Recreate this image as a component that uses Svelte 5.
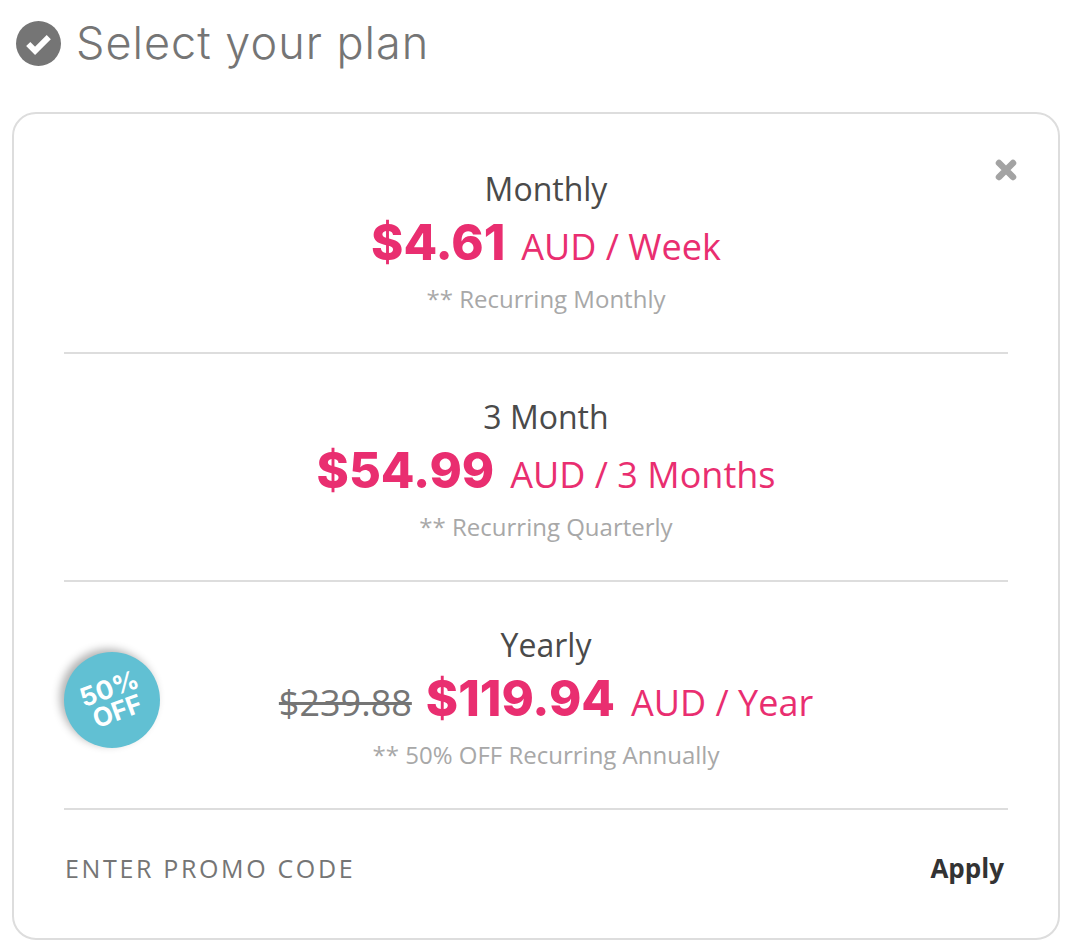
<script lang="ts">
	const plans = [
		{ name: 'Monthly', price: '$4.61', unit: 'AUD / Week', note: '** Recurring Monthly' },
		{ name: '3 Month', price: '$54.99', unit: 'AUD / 3 Months', note: '** Recurring Quarterly' },
		{ name: 'Yearly', old: '$239.88', price: '$119.94', unit: 'AUD / Year', note: '** 50% OFF Recurring Annually', badge: true }
	];
</script>

<div class="page">
	<header class="heading">
		<svg class="check" viewBox="0 0 46 46" width="45" height="45" aria-hidden="true">
			<circle cx="23" cy="23" r="23" fill="#757575" />
			<path d="M12.5 23.5l7 7 14-14" fill="none" stroke="#fff" stroke-width="6" />
		</svg>
		<h1>Select your plan</h1>
	</header>

	<section class="card">
		<svg class="close" viewBox="0 0 24 24" width="24" height="24" aria-hidden="true">
			<path d="M5 5l14 14M19 5L5 19" stroke="#a3a3a3" stroke-width="6.5" stroke-linecap="round" />
		</svg>
		{#each plans as plan}
			<div class="plan">
				{#if plan.badge}
					<div class="badge"><span>50%<br />OFF</span></div>
				{/if}
				<div class="name">{plan.name}</div>
				<div class="price-row">
					{#if plan.old}<s class="old">{plan.old}</s>{/if}
					<strong class="price">{plan.price}</strong>
					<span class="unit">{plan.unit}</span>
				</div>
				<div class="note">{plan.note}</div>
			</div>
		{/each}
		<div class="promo">
			<span class="promo-label">ENTER PROMO CODE</span>
			<span class="apply">Apply</span>
		</div>
	</section>
</div>

<style>
	:global(body) {
		margin: 0;
		background: #fff;
	}

	.page {
		width: 1072px;
		height: 950px;
		box-sizing: border-box;
		padding: 20px 12px 0 12px;
		font-family: 'Open Sans', sans-serif;
		overflow: hidden;
	}

	.heading {
		display: flex;
		align-items: center;
		gap: 15px;
		height: 46px;
		padding-left: 4px;
	}

	.heading h1 {
		margin: -2px 0 0;
		font-family: 'Inter', sans-serif;
		font-size: 45px;
		font-weight: 300;
		color: #757575;
		letter-spacing: 1px;
	}

	.card {
		position: relative;
		box-sizing: border-box;
		width: 1048px;
		height: 828px;
		margin-top: 46px;
		padding: 46px 50px 0;
		border: 2px solid #ddd;
		border-radius: 24px;
	}

	.close {
		position: absolute;
		top: 44px;
		right: 40px;
	}

	.plan {
		position: relative;
		box-sizing: content-box;
		height: 188px;
		margin-bottom: 34px;
		padding: 4px 0 0 20px;
		border-bottom: 2px solid #ddd;
		text-align: center;
	}

	.name {
		font-size: 32px;
		line-height: 50px;
		color: #4a4a4a;
	}

	.price-row {
		display: flex;
		justify-content: center;
		align-items: baseline;
		gap: 16px;
		height: 56px;
		margin-top: 1px;
		line-height: 56px;
	}

	.old {
		margin-right: -2px;
		font-size: 36px;
		color: #757575;
	}

	.price {
		font-family: 'Inter', sans-serif;
		font-size: 49px;
		font-weight: 800;
		color: #e92e70;
	}

	.unit {
		font-size: 36px;
		color: #e92e70;
	}

	.note {
		margin-top: 8px;
		font-size: 24px;
		line-height: 40px;
		color: #a8a8a8;
	}

	.badge {
		position: absolute;
		left: 0;
		top: 36px;
		display: flex;
		align-items: center;
		justify-content: center;
		width: 96px;
		height: 96px;
		border-radius: 50%;
		background: #61c0d3;
		box-shadow: -4px -3px 8px rgba(0, 0, 0, 0.3);
		color: #fff;
		font-family: 'Inter', sans-serif;
		font-size: 26px;
		font-weight: 700;
		line-height: 24px;
	}

	.badge span {
		transform: translate(1px, 0) rotate(-20deg);
	}

	.promo {
		display: flex;
		justify-content: space-between;
		align-items: center;
		height: 70px;
		margin-top: -11px;
		padding: 0 4px 0 1px;
	}

	.promo-label {
		font-size: 25px;
		letter-spacing: 2.65px;
		color: #757575;
	}

	.apply {
		font-size: 26px;
		font-weight: 700;
		color: #333;
	}
</style>
